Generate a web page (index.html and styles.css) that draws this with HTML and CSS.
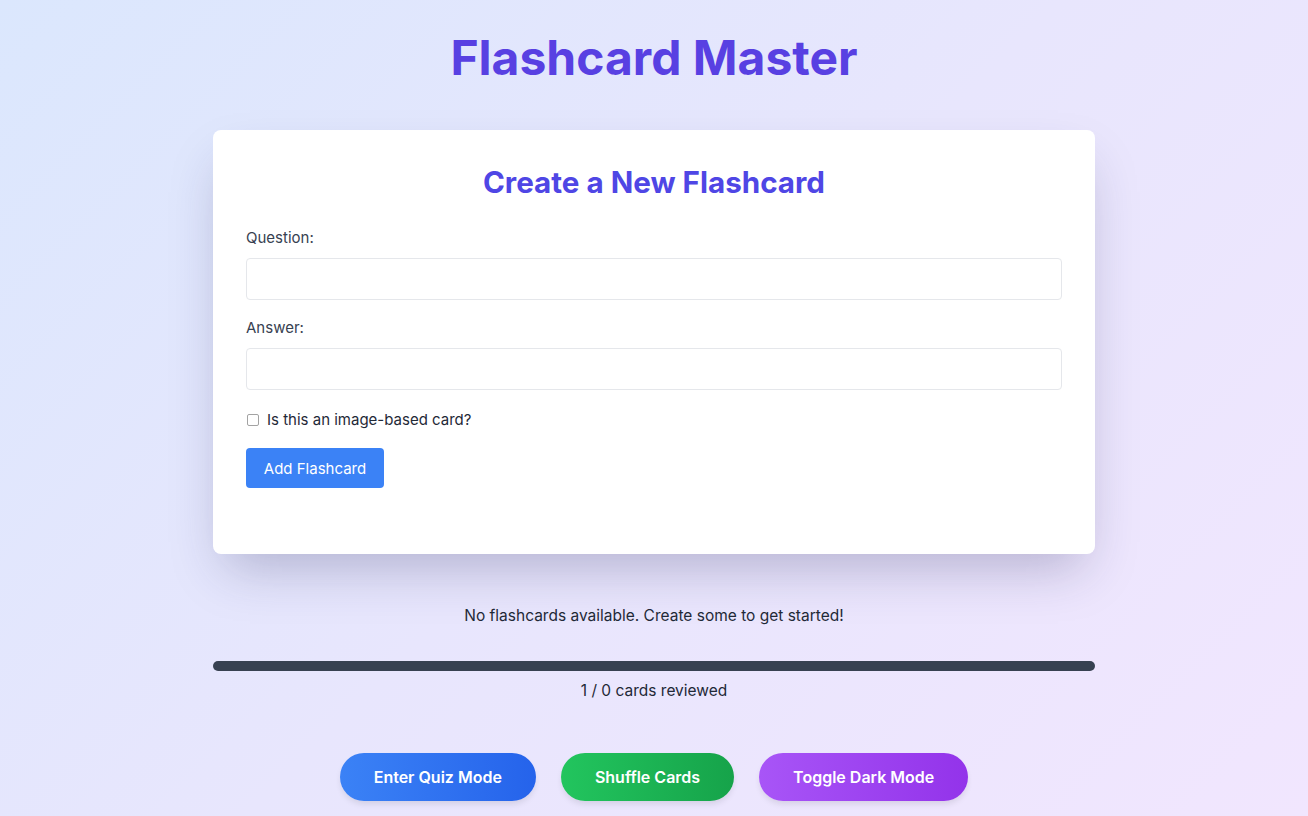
FILE: index.html
```html
<!DOCTYPE html>
<html>
<head>
<meta charset="utf-8">
<link rel="stylesheet" href="styles.css">
</head>
<body>
<div class="page">
  <h1 class="title">Flashcard Master</h1>
  <div class="card">
    <h2 class="card-title">Create a New Flashcard</h2>
    <div class="field">
      <label class="label">Question:</label>
      <input class="input" type="text">
    </div>
    <div class="field">
      <label class="label">Answer:</label>
      <input class="input" type="text">
    </div>
    <label class="check">
      <input type="checkbox" class="checkbox">
      <span>Is this an image-based card?</span>
    </label>
    <button class="add-btn">Add Flashcard</button>
  </div>
  <p class="empty">No flashcards available. Create some to get started!</p>
  <div class="progress"><div class="progress-fill"></div></div>
  <p class="reviewed">1 / 0 cards reviewed</p>
  <div class="actions">
    <button class="pill pill-blue">Enter Quiz Mode</button>
    <button class="pill pill-green">Shuffle Cards</button>
    <button class="pill pill-purple">Toggle Dark Mode</button>
  </div>
</div>
</body>
</html>
```
FILE: styles.css
```css
* { box-sizing: border-box; }
html, body { margin: 0; padding: 0; }
body {
  min-height: 816px;
  font-family: Inter, "Noto Sans", sans-serif;
  background: linear-gradient(135deg, #dbe7fd 0%, #e8e6fd 50%, #f1e6fe 100%);
  color: #1f2937;
}
.page {
  width: 882px;
  margin: 0 auto;
  padding-top: 30px;
  display: flex;
  flex-direction: column;
  align-items: center;
}
.title {
  margin: 0;
  font-size: 48px;
  line-height: 56px;
  font-weight: 700;
  color: #5840e2;
  letter-spacing: 0;
}
.card {
  margin-top: 44px;
  width: 882px;
  height: 424px;
  background: #fff;
  border-radius: 8px;
  padding: 32px 33px;
  box-shadow: 0 25px 50px -12px rgba(40, 40, 90, 0.28);
  display: flex;
  flex-direction: column;
  align-items: stretch;
}
.card-title {
  margin: 0 0 26px;
  text-align: center;
  font-size: 29.6px;
  line-height: 40px;
  font-weight: 700;
  color: #4f46e5;
}
.field { display: flex; flex-direction: column; margin-bottom: 18px; }
.label { font-size: 15px; line-height: 20px; color: #374151; margin-bottom: 10px; }
.input {
  height: 42px;
  border: 1px solid #e5e7eb;
  border-radius: 4px;
  background: #fff;
  outline: none;
  font: inherit;
}
.check {
  display: flex;
  align-items: center;
  gap: 8px;
  font-size: 15px;
  line-height: 20px;
  color: #1f2937;
  margin-top: 2px;
}
.checkbox {
  appearance: none;
  -webkit-appearance: none;
  margin: 0 0 0 1px;
  width: 12px;
  height: 12px;
  border: 1px solid #a3a3a3;
  border-radius: 2px;
  background: #fff;
}
.add-btn {
  margin-top: 18px;
  align-self: flex-start;
  width: 138px;
  height: 40px;
  background: #3b82f6;
  color: #fff;
  border: none;
  border-radius: 4px;
  font-family: inherit;
  font-size: 15px;
}
.empty {
  margin: 51px 0 0;
  font-size: 15.5px;
  line-height: 22px;
  color: #1f2937;
}
.progress {
  margin-top: 34px;
  width: 882px;
  height: 10px;
  border-radius: 999px;
  background: #374151;
}
.progress-fill { width: 0; height: 100%; }
.reviewed {
  margin: 9px 0 0;
  font-size: 15.5px;
  line-height: 22px;
  color: #1f2937;
}
.actions {
  margin-top: 51px;
  display: flex;
  gap: 25px;
}
.pill {
  height: 48px;
  padding: 0 34px;
  border: none;
  border-radius: 999px;
  color: #fff;
  font-family: inherit;
  font-size: 16px;
  font-weight: 600;
  box-shadow: 0 4px 6px -1px rgba(0,0,0,0.1);
}
.pill-blue { background: linear-gradient(90deg, #3b82f6, #2563eb); }
.pill-green { background: linear-gradient(90deg, #22c55e, #16a34a); }
.pill-purple { background: linear-gradient(90deg, #a855f7, #9333ea); }
```
